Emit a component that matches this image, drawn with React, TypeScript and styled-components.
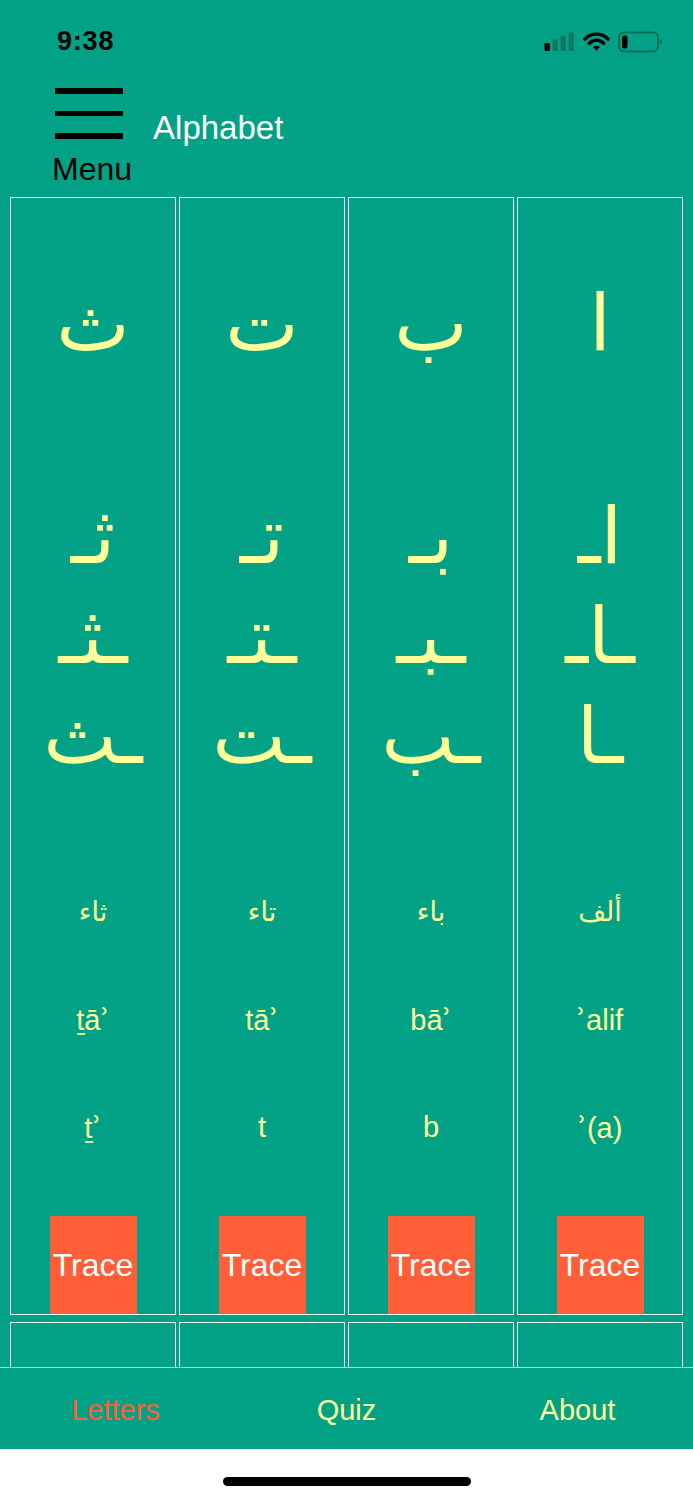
import React from "react";
import styled, { createGlobalStyle } from "styled-components";

type Letter = {
  isolated: string;
  initial: string;
  medial: string;
  final: string;
  name: string;
  translit: string;
  sound: string;
};

const letters: Letter[] = [
  { isolated: "ث", initial: "ثـ", medial: "ـثـ", final: "ـث", name: "ثاء", translit: "ṯāʾ", sound: "ṯʾ" },
  { isolated: "ت", initial: "تـ", medial: "ـتـ", final: "ـت", name: "تاء", translit: "tāʾ", sound: "t" },
  { isolated: "ب", initial: "بـ", medial: "ـبـ", final: "ـب", name: "باء", translit: "bāʾ", sound: "b" },
  { isolated: "ا", initial: "اـ", medial: "ـاـ", final: "ـا", name: "ألف", translit: "ʾalif", sound: "ʾ(a)" },
];

const TEAL = "#03a286";
const YELLOW = "#ffff99";
const ORANGE = "#ff5f38";

const GlobalStyle = createGlobalStyle`
  html, body {
    margin: 0;
    padding: 0;
    background: #ffffff;
  }
  body {
    font-family: "Liberation Sans", Arial, sans-serif;
  }
`;

// the half-ring (ʾ) is tiny in Liberation Sans, so draw it from DejaVu
const withHamza = (text: string) =>
  text.split(/(ʾ)/).map((part, i) =>
    part === "ʾ" ? <Hamza key={i}>ʾ</Hamza> : <React.Fragment key={i}>{part}</React.Fragment>
  );

const SignalIcon = () => (
  <svg width="31" height="20" viewBox="0 0 31 20">
    <rect x="0.5" y="11" width="5.5" height="8" rx="1.3" fill="#000" />
    <rect x="8.5" y="7.5" width="5.5" height="11.5" rx="1.3" fill="#0b7a63" />
    <rect x="16.5" y="4" width="5.5" height="15" rx="1.3" fill="#0b7a63" />
    <rect x="24.5" y="0.5" width="5.5" height="18.5" rx="1.3" fill="#0b7a63" />
  </svg>
);

const WifiIcon = () => (
  <svg width="27" height="20" viewBox="0 0 27 20">
    <path d="M2 7 A16 16 0 0 1 25 7" stroke="#000" strokeWidth="3.4" fill="none" strokeLinecap="round" />
    <path d="M6.3 11.2 A10 10 0 0 1 20.7 11.2" stroke="#000" strokeWidth="3.4" fill="none" strokeLinecap="round" />
    <path d="M10.1 15 L13.5 19 L16.9 15 A5 5 0 0 0 10.1 15 Z" fill="#000" />
  </svg>
);

const BatteryIcon = () => (
  <svg width="45" height="22" viewBox="0 0 45 22">
    <rect x="1" y="1.5" width="39" height="19" rx="5" stroke="#0b6e59" strokeWidth="2" fill="none" />
    <rect x="4" y="4.5" width="5.5" height="13" rx="2" fill="#000" />
    <path d="M42 8 Q44.5 9 44.5 11 Q44.5 13 42 14 Z" fill="#0b6e59" />
  </svg>
);

const App = () => {
  return (
    <>
      <GlobalStyle />
      <Screen>
        <StatusBar>
          <Time>9:38</Time>
          <StatusIcons>
            <SignalIcon />
            <WifiIcon />
            <BatteryIcon />
          </StatusIcons>
        </StatusBar>
        <Header>
          <MenuButton>
            <Burger>
              <BurgerLine />
              <BurgerLine />
              <BurgerLine />
            </Burger>
            <MenuLabel>Menu</MenuLabel>
          </MenuButton>
          <Title>Alphabet</Title>
        </Header>
        <ScrollArea>
          <CardGrid>
            {letters.map((l) => (
              <Card key={l.name}>
                <Slot $h={250}>
                  <ArabicBig>{l.isolated}</ArabicBig>
                </Slot>
                <Spacer $h={38} />
                <Slot $h={100}>
                  <ArabicBig>{l.initial}</ArabicBig>
                </Slot>
                <Slot $h={100}>
                  <ArabicBig>{l.medial}</ArabicBig>
                </Slot>
                <Slot $h={100}>
                  <ArabicBig>{l.final}</ArabicBig>
                </Slot>
                <Spacer $h={71} />
                <Slot $h={108}>
                  <ArabicName>{l.name}</ArabicName>
                </Slot>
                <Slot $h={108}>
                  <Latin>{withHamza(l.translit)}</Latin>
                </Slot>
                <Slot $h={108}>
                  <Latin>{withHamza(l.sound)}</Latin>
                </Slot>
                <ButtonRow>
                  <TraceButton>Trace</TraceButton>
                </ButtonRow>
              </Card>
            ))}
            {letters.map((l) => (
              <Card key={l.name + "-next"} />
            ))}
          </CardGrid>
        </ScrollArea>
        <TabBar>
          <Tab $active>Letters</Tab>
          <Tab>Quiz</Tab>
          <Tab>About</Tab>
        </TabBar>
        <HomeArea>
          <HomeIndicator />
        </HomeArea>
      </Screen>
    </>
  );
};

const Screen = styled.div`
  width: 693px;
  height: 1500px;
  display: flex;
  flex-direction: column;
  background: ${TEAL};
  overflow: hidden;
`;

const StatusBar = styled.div`
  height: 82px;
  flex: none;
  display: flex;
  align-items: center;
  justify-content: space-between;
  padding: 0 30px 0 57px;
  box-sizing: border-box;
`;

const Time = styled.div`
  font-family: "Liberation Sans", Arial, sans-serif;
  font-weight: 700;
  font-size: 27px;
  color: #000;
  letter-spacing: 0.8px;
`;

const StatusIcons = styled.div`
  display: flex;
  align-items: center;
  gap: 8px;
  margin-top: 2px;
`;

const Header = styled.div`
  height: 113px;
  flex: none;
  display: flex;
  align-items: flex-start;
  padding: 6px 0 0 52px;
  box-sizing: border-box;
`;

const MenuButton = styled.div`
  display: flex;
  flex-direction: column;
  align-items: flex-start;
`;

const Burger = styled.div`
  width: 68px;
  margin-left: 3px;
  display: flex;
  flex-direction: column;
  gap: 17px;
`;

const BurgerLine = styled.div`
  height: 5.5px;
  background: #000;
`;

const MenuLabel = styled.div`
  font-size: 32px;
  color: #000;
  margin-top: 14px;
  line-height: 1;
`;

const Title = styled.div`
  font-size: 33px;
  color: #fff;
  margin-left: 21px;
  margin-top: 23px;
  line-height: 1;
`;

const ScrollArea = styled.div`
  flex: 1;
  overflow: hidden;
  padding: 2px 0 0 10px;
  box-sizing: border-box;
`;

const CardGrid = styled.div`
  display: grid;
  grid-template-columns: repeat(4, 166px);
  column-gap: 3px;
  row-gap: 7px;
`;

const Card = styled.div`
  height: 1118px;
  border: 1.5px solid #f2fbf8;
  box-sizing: border-box;
  display: flex;
  flex-direction: column;
`;

const Slot = styled.div<{ $h: number }>`
  height: ${(p) => p.$h}px;
  flex: none;
  display: flex;
  align-items: center;
  justify-content: center;
`;

const Spacer = styled.div<{ $h: number }>`
  height: ${(p) => p.$h}px;
  flex: none;
`;

const ArabicBig = styled.div`
  font-family: "DejaVu Sans", "Noto Sans", sans-serif;
  font-size: 78px;
  color: ${YELLOW};
  line-height: 1;
  direction: rtl;
`;

const ArabicName = styled.div`
  font-family: "DejaVu Sans", "Noto Sans", sans-serif;
  font-size: 27px;
  color: ${YELLOW};
  direction: rtl;
`;

const Latin = styled.div`
  font-family: "Liberation Sans", Arial, sans-serif;
  font-size: 29px;
  color: ${YELLOW};
`;

const Hamza = styled.span`
  font-family: "DejaVu Sans", sans-serif;
  font-size: 30px;
`;

const ButtonRow = styled.div`
  margin-top: auto;
  display: flex;
  justify-content: center;
`;

const TraceButton = styled.div`
  width: 87px;
  height: 98px;
  background: ${ORANGE};
  color: #fff;
  font-size: 32px;
  display: flex;
  align-items: center;
  justify-content: center;
`;

const TabBar = styled.div`
  height: 82px;
  flex: none;
  display: flex;
  align-items: center;
  border-top: 1.5px solid #a6d9cc;
  box-sizing: border-box;
  background: ${TEAL};
  padding-top: 3px;
`;

const Tab = styled.div<{ $active?: boolean }>`
  flex: 1;
  text-align: center;
  font-size: 29px;
  color: ${(p) => (p.$active ? ORANGE : YELLOW)};
`;

const HomeArea = styled.div`
  height: 51px;
  flex: none;
  background: #fff;
  display: flex;
  justify-content: center;
  padding-top: 28px;
  box-sizing: border-box;
`;

const HomeIndicator = styled.div`
  width: 248px;
  height: 9px;
  border-radius: 5px;
  background: #000;
`;

export default App;
